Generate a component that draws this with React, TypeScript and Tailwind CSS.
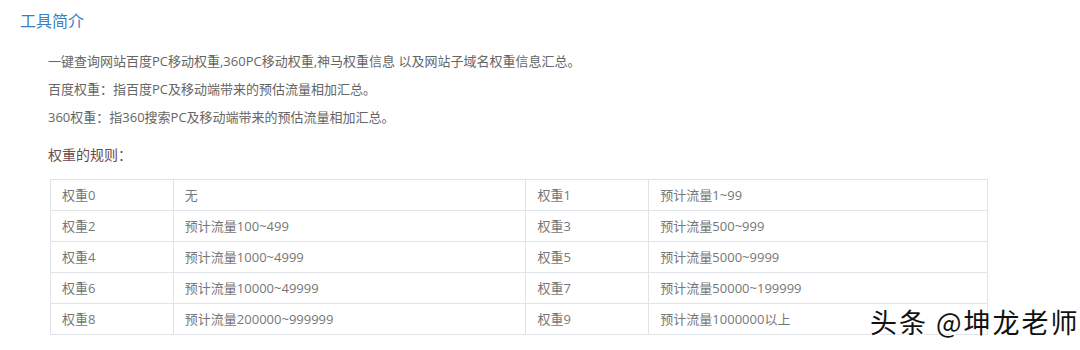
const ROWS = [
  ["权重0", "无", "权重1", "预计流量1~99"],
  ["权重2", "预计流量100~499", "权重3", "预计流量500~999"],
  ["权重4", "预计流量1000~4999", "权重5", "预计流量5000~9999"],
  ["权重6", "预计流量10000~49999", "权重7", "预计流量50000~199999"],
  ["权重8", "预计流量200000~999999", "权重9", "预计流量1000000以上"],
];

export default function App() {
  return (
    <div className="relative w-[1080px] h-[350px] overflow-hidden bg-white font-['Open_Sans','Noto_Sans_CJK_SC',sans-serif]">
      <div className="pl-[20px] pt-[9px]">
        <h2 className="text-[16px] leading-[24px] text-[#3a7fc0]">工具简介</h2>
      </div>

      <div className="pl-[48px] mt-[14px] text-[13px] leading-[28px] text-[#666666]">
        <p>一键查询网站百度PC移动权重,360PC移动权重,神马权重信息 以及网站子域名权重信息汇总。</p>
        <p>百度权重：指百度PC及移动端带来的预估流量相加汇总。</p>
        <p>360权重：指360搜索PC及移动端带来的预估流量相加汇总。</p>

        <p className="mt-[12px] text-[14px] leading-[24px] text-[#6b4b4b]">权重的规则：</p>

        <table className="mt-[12px] ml-[2px] w-[938px] border-collapse text-[13px] text-[#777777]">
          <colgroup>
            <col className="w-[123px]" />
            <col className="w-[353px]" />
            <col className="w-[123px]" />
            <col className="w-[339px]" />
          </colgroup>
          <tbody>
            {ROWS.map((row, i) => (
              <tr key={i} className="h-[31px]">
                {row.map((cell, j) => (
                  <td key={j} className="border border-[#e0e3e8] px-[11px] py-0 leading-[30px]">
                    {cell}
                  </td>
                ))}
              </tr>
            ))}
          </tbody>
        </table>
      </div>

      <div className="absolute left-[870px] top-[305px] font-['Noto_Sans_CJK_SC',sans-serif] text-[27px] leading-[34px] tracking-[2px] text-[#111111] [text-shadow:1px_1px_0_#fff,-1px_-1px_0_#fff,1px_-1px_0_#fff,-1px_1px_0_#fff,2px_2px_1px_#fff]">
        头条 @坤龙老师
      </div>
    </div>
  );
}
